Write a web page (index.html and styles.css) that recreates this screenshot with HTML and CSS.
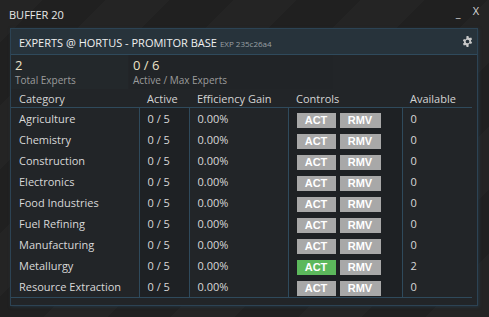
FILE: index.html
```html
<!DOCTYPE html>
<html lang="en">
<head>
    <meta charset="UTF-8">
    <title>BUFFER 20</title>
    <link rel="stylesheet" href="styles.css">
</head>
<body>

    <!-- title bar -->
    <div class="titlebar">
        <span class="title">BUFFER 20</span>
        <span class="winbtns"><span class="min">_</span><span class="close">X</span></span>
    </div>

    <!-- panel -->
    <div class="panel">
        <div class="panel-head">
            <span class="head-title">EXPERTS @ HORTUS - PROMITOR BASE</span>
            <span class="head-exp">EXP 235c26a4</span>
            <svg class="gear" width="11" height="11" viewBox="0 0 16 16">
                <path fill="#c8c8c8" d="M6.6 0h2.8l.4 2.2c.5.2 1 .4 1.4.8l2.1-.8 1.4 2.4-1.7 1.5c.1.5.1 1.1 0 1.6l1.7 1.5-1.4 2.4-2.1-.8c-.4.4-.9.6-1.4.8L9.4 16H6.6l-.4-2.2c-.5-.2-1-.4-1.4-.8l-2.1.8-1.4-2.4L3 9.9c-.1-.5-.1-1.1 0-1.6L1.3 6.8l1.4-2.4 2.1.8c.4-.4.9-.6 1.4-.8zM8 5.3a2.7 2.7 0 1 0 0 5.4 2.7 2.7 0 0 0 0-5.4z"/>
            </svg>
        </div>

        <div class="stats">
            <div class="stat">
                <div class="stat-num">2</div>
                <div class="stat-label">Total Experts</div>
            </div>
            <div class="stat">
                <div class="stat-num">0 / 6</div>
                <div class="stat-label">Active / Max Experts</div>
            </div>
        </div>

        <table class="experts">
            <tr>
                <th class="c-cat">Category</th>
                <th class="c-act">Active</th>
                <th class="c-eff">Efficiency Gain</th>
                <th class="c-ctl">Controls</th>
                <th class="c-av">Available</th>
            </tr>
            <tr><td>Agriculture</td><td>0 / 5</td><td>0.00%</td><td><span class="btn">ACT</span><span class="btn">RMV</span></td><td>0</td></tr>
            <tr><td>Chemistry</td><td>0 / 5</td><td>0.00%</td><td><span class="btn">ACT</span><span class="btn">RMV</span></td><td>0</td></tr>
            <tr><td>Construction</td><td>0 / 5</td><td>0.00%</td><td><span class="btn">ACT</span><span class="btn">RMV</span></td><td>0</td></tr>
            <tr><td>Electronics</td><td>0 / 5</td><td>0.00%</td><td><span class="btn">ACT</span><span class="btn">RMV</span></td><td>0</td></tr>
            <tr><td>Food Industries</td><td>0 / 5</td><td>0.00%</td><td><span class="btn">ACT</span><span class="btn">RMV</span></td><td>0</td></tr>
            <tr><td>Fuel Refining</td><td>0 / 5</td><td>0.00%</td><td><span class="btn">ACT</span><span class="btn">RMV</span></td><td>0</td></tr>
            <tr><td>Manufacturing</td><td>0 / 5</td><td>0.00%</td><td><span class="btn">ACT</span><span class="btn">RMV</span></td><td>0</td></tr>
            <tr><td>Metallurgy</td><td>0 / 5</td><td>0.00%</td><td><span class="btn green">ACT</span><span class="btn">RMV</span></td><td>2</td></tr>
            <tr><td>Resource Extraction</td><td>0 / 5</td><td>0.00%</td><td><span class="btn">ACT</span><span class="btn">RMV</span></td><td>0</td></tr>
        </table>
    </div>

</body>
</html>
```

FILE: styles.css
```css
/* window */
body {
    margin: 0;
    height: 317px;
    overflow: hidden;
    font-family: "Open Sans", "DejaVu Sans", sans-serif;
    color: #d8d8d8;
    background: repeating-linear-gradient(-45deg, #242424 0 45px, #202020 45px 90px);
}

.titlebar {
    display: flex;
    justify-content: space-between;
    align-items: center;
    height: 28px;
    padding: 0 10px 0 9px;
}
.title {
    font-size: 11px;
    color: #e8e8e8;
    margin-top: 1px;
}
.winbtns {
    display: flex;
    gap: 12px;
    font-size: 11px;
    color: #d8d8d8;
    margin-top: -6px;
}
.min { margin-top: 2px; }

/* panel */
.panel {
    margin: 0 11px 0 10px;
    border: 1px solid #2c4354;
    background: #222528;
    box-shadow: 1px 1px 3px rgba(40, 70, 90, 0.5);
    padding-bottom: 7px;
}
.panel-head {
    display: flex;
    align-items: center;
    height: 25px;
    padding-left: 8px;
    background: #27333b;
    border-bottom: 1px solid #2f4a5c;
    position: relative;
}
.head-title {
    font-size: 11px;
    color: #f0f0f0;
    margin-top: 1px;
}
.head-exp {
    font-size: 8px;
    color: #9aa0a4;
    margin-left: 3px;
    margin-top: 3px;
}
.gear {
    position: absolute;
    right: 4px;
    top: 7px;
}

.stats {
    display: flex;
    gap: 1px;
    height: 34px;
}
.stat {
    width: 113px;
    padding-left: 4px;
    background: #23282b;
}
.stat + .stat {
    width: 200px;
    background: #212427;
}
.stat-num {
    font-size: 13px;
    color: #ece3c8;
    line-height: 16px;
    margin-top: 2px;
}
.stat-label {
    font-size: 10px;
    color: #9c9c9c;
    line-height: 14px;
}

/* table */
.experts {
    border-collapse: collapse;
    width: 461px;
    font-size: 11px;
}
.experts th {
    height: 18px;
    padding: 0 0 0 8px;
    text-align: left;
    font-weight: normal;
    color: #d4d4d4;
    border-bottom: 1px solid #2f4a5c;
}
.experts td {
    height: 21px;
    padding: 0 0 0 8px;
    border-left: 1px solid #2f4a5c;
    border-bottom: 0;
}
.experts td:first-child {
    border-left: 0;
}
.experts tr:last-child td {
    border-bottom: 1px solid #2f4a5c;
}
.experts td:nth-child(2), .experts td:nth-child(4) {
    background: #1e2124;
}
.c-cat { width: 120px; }
.c-act { width: 42px; }
.c-eff { width: 91px; }
.c-ctl { width: 106px; }

.btn {
    display: inline-block;
    width: 39px;
    height: 15px;
    line-height: 15px;
    margin: 3px 4px 0 0;
    vertical-align: top;
    background: #a8a8a8;
    color: #fff;
    font-family: "Liberation Sans", Arial, sans-serif;
    font-weight: bold;
    font-size: 11px;
    text-align: center;
}
.btn + .btn { width: 41px; }
.btn.green { background: #5cb85c; }
```
